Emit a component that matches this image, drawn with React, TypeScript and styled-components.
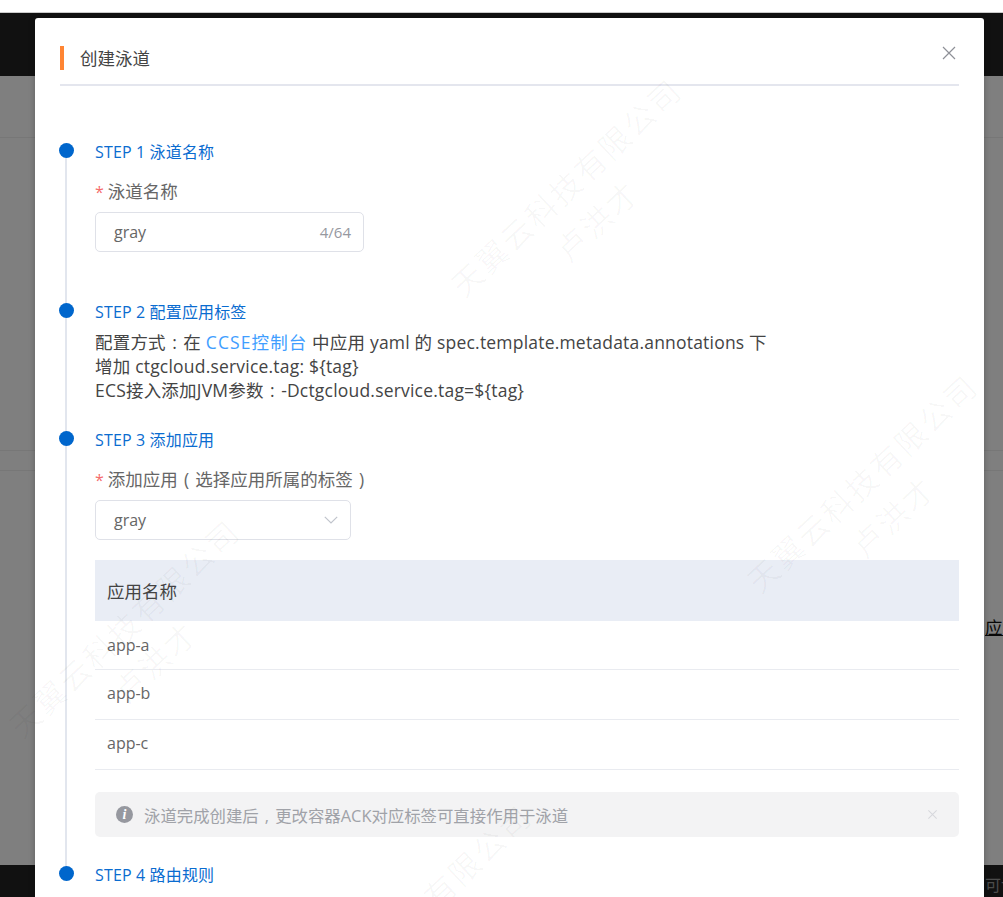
import React from 'react';
import styled, { createGlobalStyle } from 'styled-components';

const GlobalStyle = createGlobalStyle`
  html, body {
    margin: 0;
    padding: 0;
    background: #fff;
    overflow: hidden;
  }
  body {
    font-family: "Open Sans", "Noto Sans CJK SC", sans-serif;
  }
  * {
    box-sizing: border-box;
  }
`;

const Page = styled.div`
  position: relative;
  width: 1003px;
  height: 897px;
  overflow: hidden;
  display: flex;
  flex-direction: column;
`;

const TopStrip = styled.div`
  height: 13px;
  background: #fff;
  border-bottom: 1px solid #ccc;
`;

const AppHeader = styled.div`
  height: 63px;
  background: #222;
`;

const Toolbar = styled.div`
  height: 62px;
  background: #fff;
  border-bottom: 1px solid #eee;
`;

const Band = styled.div<{ $h: number }>`
  height: ${(p) => p.$h}px;
  background: #fff;
  border-bottom: 1px solid #eee;
`;

const BackContent = styled.div`
  flex: 1;
  background: #fff;
  padding: 144px 0 0 985px;
  white-space: nowrap;
  font-size: 17.5px;
  line-height: 24px;
  color: #111;
  text-decoration: underline;
  overflow: hidden;
`;

const AppFooter = styled.div`
  height: 32px;
  background: #222;
  padding: 9px 0 0 985px;
  white-space: nowrap;
  font-size: 16px;
  line-height: 22px;
  color: #999;
  overflow: hidden;
`;

const Backdrop = styled.div`
  position: absolute;
  inset: 13px 0 0 0;
  background: rgba(0, 0, 0, 0.5);
`;

const Modal = styled.div`
  position: absolute;
  left: 35px;
  top: 18px;
  width: 949px;
  height: 900px;
  background: #fff;
  border-radius: 3px;
  box-shadow: 0 0 6px rgba(0, 0, 0, 0.25);
  padding: 28px 25px 0;
`;

const ModalHeader = styled.div`
  display: flex;
  align-items: flex-start;
  height: 40px;
  border-bottom: 2px solid #e4e6ee;
`;

const TitleMark = styled.span`
  width: 4px;
  height: 24px;
  background: #ff8533;
  margin-right: 16px;
`;

const Title = styled.span`
  font-size: 17.5px;
  line-height: 24px;
  color: #444;
`;

const CloseButton = styled.button`
  position: absolute;
  right: 27px;
  top: 27px;
  width: 16px;
  height: 16px;
  padding: 0;
  border: none;
  background: none;
  display: flex;
`;

const Steps = styled.div`
  display: flex;
  flex-direction: column;
  padding-top: 57px;
`;

const Step = styled.section<{ $h: number; $last?: boolean }>`
  position: relative;
  height: ${(p) => p.$h}px;
  padding-left: 35px;

  &::before {
    content: '';
    display: ${(p) => (p.$last ? 'none' : 'block')};
    position: absolute;
    left: 5px;
    top: 8px;
    bottom: -8px;
    width: 2px;
    background: #e2e6ee;
  }
`;

const Dot = styled.span`
  position: absolute;
  left: -1px;
  top: 0;
  width: 15px;
  height: 15px;
  border-radius: 50%;
  background: #0066cc;
`;

const StepTitle = styled.h3`
  margin: 0;
  font-size: 16px;
  line-height: 18px;
  letter-spacing: 0.15px;
  font-weight: 400;
  color: #0a6cd0;
`;

const FieldLabel = styled.div`
  margin-top: 18px;
  font-size: 17.5px;
  line-height: 24px;
  color: #666;
`;

const Required = styled.span`
  color: #f56c6c;
  margin-right: 4px;
  font-size: 16px;
`;

// Full-width punctuation sits centred in its em box in the reference's font
const FullWidth = styled.span`
  display: inline-block;
  width: 1em;
  text-align: center;
`;

const InputBox = styled.div<{ $w: number }>`
  margin-top: 8px;
  width: ${(p) => p.$w}px;
  height: 40px;
  border: 1px solid #dfe1e8;
  border-radius: 5px;
  padding: 0 12px 0 18px;
  display: flex;
  align-items: center;
  justify-content: space-between;
  font-size: 16px;
  color: #666;
`;

const Counter = styled.span`
  font-size: 15px;
  color: #96989f;
`;

const Description = styled.div`
  margin-top: 9px;
  font-size: 17.5px;
  line-height: 24px;
  letter-spacing: 0.2px;
  color: #444;
  white-space: nowrap;
`;

const DocLink = styled.a`
  color: #409eff;
  letter-spacing: 1.1px;
  text-decoration: none;
`;

const AppTable = styled.div`
  margin-top: 20px;
  width: 864px;
`;

const TableHead = styled.div`
  height: 61px;
  background: #e9edf5;
  padding-left: 12px;
  display: flex;
  align-items: center;
  font-size: 17.5px;
  color: #444;
`;

const TableRow = styled.div`
  height: 50px;
  padding: 0 0 3px 12px;
  display: flex;
  align-items: center;
  border-bottom: 1px solid #e9ebf0;
  font-size: 16px;
  color: #666;

  &:nth-child(2) {
    height: 49px;
    padding-bottom: 1px;
  }
`;

const Alert = styled.div`
  margin-top: 22px;
  width: 864px;
  height: 45px;
  background: #f3f3f4;
  border-radius: 5px;
  padding: 0 21px;
  display: flex;
  align-items: center;
  font-size: 16.4px;
  color: #a0a2a8;
`;

const AlertIcon = styled.span`
  width: 17px;
  height: 17px;
  border-radius: 50%;
  background: #96989f;
  color: #fff;
  font-family: "Liberation Serif", serif;
  font-style: italic;
  font-weight: 700;
  font-size: 14px;
  line-height: 17px;
  text-align: center;
  margin-right: 11px;
`;

const AlertText = styled.span`
  flex: 1;
`;

const WatermarkLayer = styled.div`
  position: absolute;
  inset: 0;
  pointer-events: none;
  overflow: hidden;
`;

const Watermark = styled.div<{ $x: number; $y: number }>`
  position: absolute;
  left: ${(p) => p.$x}px;
  top: ${(p) => p.$y}px;
  width: 360px;
  transform: translate(-50%, -50%) rotate(-43deg);
  text-align: center;
  font-size: 31px;
  letter-spacing: 2.5px;
  line-height: 46px;
  color: rgba(0, 0, 0, 0.03);
  white-space: nowrap;
`;

const Cross = ({ size, color }: { size: number; color: string }) => (
  <svg width={size} height={size} viewBox="0 0 16 16" fill="none" stroke={color} strokeWidth={size > 12 ? 1.2 : 1.5}>
    <path d="M2 2 14 14M14 2 2 14" />
  </svg>
);

const Chevron = () => (
  <svg width="14" height="8" viewBox="0 0 14 8" fill="none" stroke="#c0c4cc" strokeWidth="1.2">
    <path d="M.8.8 7 7l6.2-6.2" />
  </svg>
);

const watermarks = [
  { x: 582, y: 204 },
  { x: 878, y: 500 },
  { x: 140, y: 645 },
  { x: 432, y: 930 },
];

const apps = ['app-a', 'app-b', 'app-c'];

export default function App() {
  return (
    <Page>
      <GlobalStyle />
      <TopStrip />
      <AppHeader />
      <Toolbar />
      <Band $h={313} />
      <Band $h={20} />
      <BackContent>应添加</BackContent>
      <AppFooter>可访问</AppFooter>
      <Backdrop />
      <Modal>
        <ModalHeader>
          <TitleMark />
          <Title>创建泳道</Title>
        </ModalHeader>
        <CloseButton aria-label="关闭">
          <Cross size={16} color="#8e9097" />
        </CloseButton>
        <Steps>
          <Step $h={160}>
            <Dot />
            <StepTitle>STEP 1 泳道名称</StepTitle>
            <FieldLabel>
              <Required>*</Required>泳道名称
            </FieldLabel>
            <InputBox $w={269}>
              gray
              <Counter>4/64</Counter>
            </InputBox>
          </Step>
          <Step $h={128}>
            <Dot />
            <StepTitle>STEP 2 配置应用标签</StepTitle>
            <Description>
              配置方式<FullWidth>:</FullWidth>在 <DocLink href="#">CCSE控制台</DocLink> 中应用 yaml 的 spec.template.metadata.annotations 下
              <br />
              增加 ctgcloud.service.tag: {'${tag}'}
              <br />
              ECS接入添加JVM参数<FullWidth>:</FullWidth>-Dctgcloud.service.tag={'${tag}'}
            </Description>
          </Step>
          <Step $h={435}>
            <Dot />
            <StepTitle>STEP 3 添加应用</StepTitle>
            <FieldLabel>
              <Required>*</Required>添加应用<FullWidth>(</FullWidth>选择应用所属的标签<FullWidth>)</FullWidth>
            </FieldLabel>
            <InputBox $w={256}>
              gray
              <Chevron />
            </InputBox>
            <AppTable>
              <TableHead>应用名称</TableHead>
              {apps.map((name) => (
                <TableRow key={name}>{name}</TableRow>
              ))}
            </AppTable>
            <Alert>
              <AlertIcon>i</AlertIcon>
              <AlertText>
                泳道完成创建后<FullWidth>,</FullWidth>更改容器ACK对应标签可直接作用于泳道
              </AlertText>
              <Cross size={11} color="#d6d7dc" />
            </Alert>
          </Step>
          <Step $h={40} $last>
            <Dot />
            <StepTitle>STEP 4 路由规则</StepTitle>
          </Step>
        </Steps>
      </Modal>
      <WatermarkLayer>
        {watermarks.map((m) => (
          <Watermark key={m.x} $x={m.x} $y={m.y}>
            天翼云科技有限公司
            <br />
            卢洪才
          </Watermark>
        ))}
      </WatermarkLayer>
    </Page>
  );
}
